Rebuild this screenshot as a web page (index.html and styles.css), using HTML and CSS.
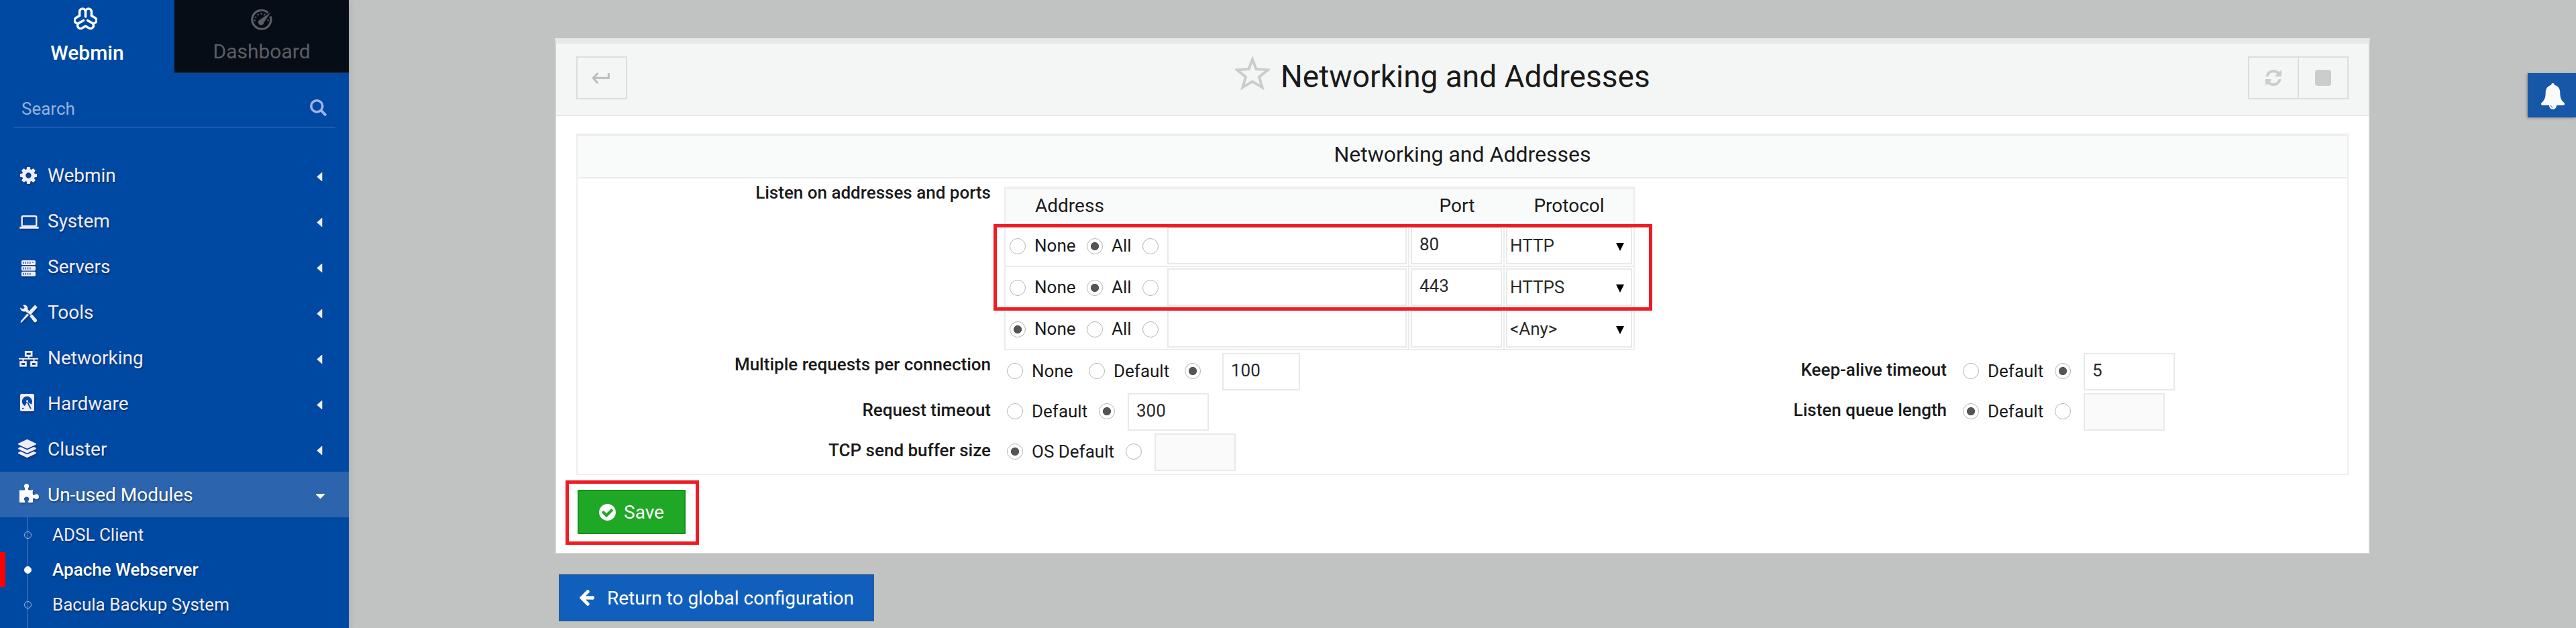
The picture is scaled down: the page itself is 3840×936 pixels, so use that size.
FILE: index.html
```html
<!DOCTYPE html>
<html lang="en">
<head>
<meta charset="utf-8">
<title>Networking and Addresses</title>
<link rel="stylesheet" href="styles.css">
</head>
<body>
<div class="app">
  <aside class="sidebar">
    <nav class="tabs">
      <a class="tab tab-active">
        <svg class="logo" width="35" height="33" viewBox="0 0 35 33" fill="none" stroke="#fff" stroke-width="3.5" stroke-linecap="round" stroke-linejoin="round">
          <defs><path id="lobe" d="M8.6 12.3V6.4a4.45 4.45 0 0 1 8.9 0V14M17.5 6.4a4.45 4.45 0 0 1 8.9 0v5.9"/></defs>
          <use href="#lobe"/>
          <use href="#lobe" transform="rotate(120 17.5 17.6)"/>
          <use href="#lobe" transform="rotate(240 17.5 17.6)"/>
        </svg>
        <span>Webmin</span>
      </a>
      <a class="tab tab-dark">
        <svg class="gauge" width="32" height="32" viewBox="0 0 32 32" fill="none">
          <path d="M25.5 5.1A14 14 0 1 0 29 10.4" stroke="currentColor" stroke-width="3.2"/>
          <path d="M29.6 4.2 19.4 19.4a4.2 4.2 0 1 1-5.6-4.2z" fill="currentColor"/>
          <g fill="currentColor"><circle cx="5.8" cy="16.4" r="1.2"/><circle cx="7.2" cy="11.6" r="1.2"/><circle cx="10.6" cy="7.9" r="1.2"/><circle cx="15.4" cy="6.5" r="1.2"/><circle cx="20.2" cy="7.7" r="1.2"/><circle cx="25.6" cy="16.4" r="1.2"/></g>
        </svg>
        <span>Dashboard</span>
      </a>
    </nav>
    <div class="search">
      <span>Search</span>
      <svg width="25" height="25" viewBox="0 0 25 25" fill="none" stroke="#9fb2e4" stroke-linecap="round"><circle cx="10.3" cy="10.3" r="8.5" stroke-width="3.6"/><path d="m17.2 17.2 5.5 5.6" stroke-width="4"/></svg>
    </div>
    <ul class="menu">
      <li class="item"><span class="icon"><svg class="i-cog" width="25" height="25" viewBox="0 0 1536 1536" fill="currentColor"><path d="M1024 768q0-106-75-181t-181-75-181 75-75 181 75 181 181 75 181-75 75-181zm512-109v222q0 12-8 23t-20 13l-185 28q-19 54-39 91 35 50 107 138 10 12 10 25t-9 23q-27 37-99 108t-94 71q-12 0-26-9l-138-108q-44 23-91 38-16 136-29 186-7 28-36 28H657q-14 0-24.500-8.500T621 1506l-28-184q-49-16-90-37l-141 107q-10 9-25 9-14 0-25-11-126-114-165-168-7-10-7-23 0-12 8-23 15-21 51-66.500t54-70.500q-27-50-41-99L29 913q-13-2-21-12.500T0 877V655q0-12 8-23t19-13l186-28q14-46 39-92-40-57-107-138-10-12-10-24 0-10 9-23 26-36 98.500-107.500T337 135q13 0 26 10l138 107q44-23 91-38 16-136 29-186 7-28 36-28h222q14 0 24.500 8.500T915 30l28 184q49 16 90 37l142-107q9-9 24-9 13 0 25 10 129 119 165 170 7 8 7 22 0 12-8 23-15 21-51 66.500t-54 70.500q26 50 41 98l183 28q13 2 21 12.500t8 23.500z"/></svg></span><span class="name">Webmin</span><svg class="caret" width="13" height="13" viewBox="0 0 13 13" fill="currentColor"><path d="M9.300 0v13h-.8L1.300 6.500 8.500 0z"/></svg></li>
      <li class="item"><span class="icon"><svg class="i-laptop" width="29" height="20" viewBox="0 0 29 20" fill="none" stroke="currentColor" stroke-width="2.400"><rect x="3.700" y="1.200" width="21.600" height="14.800" rx="1.600"/><path d="M.3 18.300h28.400" stroke-width="3"/></svg></span><span class="name">System</span><svg class="caret" width="13" height="13" viewBox="0 0 13 13" fill="currentColor"><path d="M9.300 0v13h-.8L1.300 6.500 8.500 0z"/></svg></li>
      <li class="item"><span class="icon"><svg class="i-server" width="21" height="24" viewBox="0 0 21 24"><g fill="currentColor"><rect width="21" height="7" rx="1.500"/><rect y="8.400" width="21" height="7" rx="1.500"/><rect y="16.800" width="21" height="7" rx="1.500"/></g><path d="M3 2v3M6.300 2v3M9.600 2v3M12.900 2v3M17 2.500v1.500M3 10.400v3M6.300 10.400v3M9.600 10.400v3M12.900 10.400v3M3 18.800v3M6.300 18.800v3M9.600 18.800v3M12.900 18.800v3" stroke="#0049a2" stroke-width="1.300"/></svg></span><span class="name">Servers</span><svg class="caret" width="13" height="13" viewBox="0 0 13 13" fill="currentColor"><path d="M9.300 0v13h-.8L1.300 6.500 8.500 0z"/></svg></li>
      <li class="item"><span class="icon"><svg class="i-tools" width="26" height="27" viewBox="0 0 26 27" fill="currentColor"><path d="M4.200.8C8-.6 12.300 2 11.400 7.200l2.200 2.400-3 3-2.800-2.700C4.500 11.500.3 9.300 0 4.600l4.100 2.200 2.700-2.400z"/><path d="M14.300 17.600l3.300-3.300 6.700 7.500a2.700 2.700 0 0 1-3.600 4z"/><path d="M22.200.5 25.800 4 15.300 15.700l-4.200-3.800z"/><path d="m10.600 13.300 2.500 2.300L2.300 26.400.6 26.900l.5-2.300z"/></svg></span><span class="name">Tools</span><svg class="caret" width="13" height="13" viewBox="0 0 13 13" fill="currentColor"><path d="M9.300 0v13h-.8L1.300 6.500 8.500 0z"/></svg></li>
      <li class="item"><span class="icon"><svg class="i-net" width="29" height="24" viewBox="0 0 29 24" fill="none" stroke="currentColor"><g stroke-width="2.800"><rect x="10.300" y="1.400" width="8.800" height="5.800"/><rect x="2.600" y="16.600" width="7.800" height="5.600"/><rect x="18.600" y="16.600" width="7.800" height="5.600"/></g><path d="M0 11.800h29M14.700 8v4M6.500 12v4M22.500 12v4" stroke-width="2"/></svg></span><span class="name">Networking</span><svg class="caret" width="13" height="13" viewBox="0 0 13 13" fill="currentColor"><path d="M9.300 0v13h-.8L1.300 6.500 8.500 0z"/></svg></li>
      <li class="item"><span class="icon"><svg class="i-disk" width="21" height="26" viewBox="0 0 21 26"><rect width="21" height="26" rx="2.500" fill="currentColor"/><path d="M7.200 18.300A7.600 7.600 0 1 1 16.600 15.800l-5-3.600-2.200 1.600z" fill="#0049a2"/><circle cx="10.500" cy="10.800" r="1.500" fill="currentColor"/><path d="m10.600 14 1.600-.9 4.600 8.600-1.800.9z" fill="#0049a2"/><circle cx="4.200" cy="21.900" r="1.200" fill="#0049a2"/></svg></span><span class="name">Hardware</span><svg class="caret" width="13" height="13" viewBox="0 0 13 13" fill="currentColor"><path d="M9.300 0v13h-.8L1.300 6.500 8.500 0z"/></svg></li>
      <li class="item"><span class="icon"><svg class="i-layers" width="27" height="27" viewBox="0 0 512 512" fill="currentColor"><path d="M12.410 148.020l232.940 105.670c6.800 3.090 14.490 3.090 21.290 0l232.940-105.670c16.550-7.510 16.550-32.520 0-40.030L266.650 2.310a25.607 25.607 0 0 0-21.290 0L12.410 107.980c-16.550 7.510-16.550 32.530 0 40.040zm487.180 88.280l-58.090-26.330-161.640 73.270c-7.560 3.430-15.590 5.170-23.860 5.170s-16.290-1.740-23.860-5.170L70.510 209.970l-58.100 26.330c-16.550 7.500-16.550 32.500 0 40l232.940 105.590c6.800 3.080 14.490 3.080 21.290 0L499.590 276.300c16.550-7.500 16.550-32.500 0-40zm0 127.800l-57.870-26.230-161.860 73.370c-7.560 3.430-15.590 5.170-23.860 5.170s-16.290-1.740-23.860-5.170L70.290 337.870 12.410 364.100c-16.550 7.500-16.550 32.500 0 40l232.940 105.590c6.800 3.080 14.490 3.080 21.290 0L499.590 404.100c16.550-7.500 16.550-32.500 0-40z"/></svg></span><span class="name">Cluster</span><svg class="caret" width="13" height="13" viewBox="0 0 13 13" fill="currentColor"><path d="M9.300 0v13h-.8L1.300 6.500 8.500 0z"/></svg></li>
      <li class="item item-open"><span class="icon"><svg class="i-puzzle" width="29" height="28" viewBox="0 0 29 28" fill="currentColor"><path d="M0 9.200q4 .9 7.800.2C9.500 8.300 7 5.700 7 3.500 7 1.300 8.600 0 10.600 0s3.600 1.300 3.600 3.500c0 2.200-2.400 4.200-1 5.600 2.400.9 4.800.5 7-.1-.6 3-.7 5.500 0 7.600 1.500 1.300 2.700-1.200 5.200-1.200 2.400 0 3.600 1.700 3.600 3.800s-1.300 3.800-3.500 3.800c-2.500 0-3.500-2.200-5-1.500-1 1.700-.5 4.300 0 6.300-2.400.4-4.800.6-7.300 0-1-1.400 1.300-2.500 1.300-5 0-2-1.600-3.400-3.700-3.400S6.900 20.800 6.900 22.800c0 2.400 2.300 3.500 1.400 4.900-2.500.5-5.600.2-8.300 0z"/></svg></span><span class="name">Un-used Modules</span><svg class="caret" width="13" height="13" viewBox="0 0 13 13" fill="currentColor"><path d="M0 3h13v1L6.500 10.500 0 4z"/></svg></li>
    </ul>
    <ul class="submenu">
      <li class="sub"><i class="dot"></i><span>ADSL Client</span></li>
      <li class="sub sub-active"><i class="dot"></i><span>Apache Webserver</span></li>
      <li class="sub"><i class="dot"></i><span>Bacula Backup System</span></li>
      <li class="sub"></li>
    </ul>
  </aside>

  <main class="main">
    <section class="panel">
      <header class="panel-head">
        <a class="tool tool-back"><svg width="27" height="17" viewBox="0 0 27 17" fill="none" stroke="#bcbcbc" stroke-width="3"><path d="M25.300 1v7.300H3"/><path d="M9.200 1 2.200 8.300l7 7.700"/></svg></a>
        <h1 class="title"><svg width="52" height="50" viewBox="0 0 52 50" fill="none" stroke="#ccc" stroke-width="4"><path d="M26 4.500 31.400 18.800 49 20.200 36 30.600l4.600 15.600L26 37.500l-14.600 8.700L16 30.600 3 20.200l17.600-1.400z"/></svg><span>Networking and Addresses</span></h1>
        <div class="tools">
          <a class="tool"><svg width="24" height="24" viewBox="0 0 1536 1536" fill="#ccc"><path d="M1511 928q0 5-1 7-64 268-268 434.500T764 1536q-146 0-282.500-55T238 1324l-129 129q-19 19-45 19t-45-19-19-45V960q0-26 19-45t45-19h448q26 0 45 19t19 45-19 45l-137 137q71 66 161 102t187 36q134 0 250-65t186-179q11-17 53-117 8-23 30-23h192q13 0 22.500 9.500t9.500 22.500zm25-800v448q0 26-19 45t-45 19h-448q-26 0-45-19t-19-45 19-45l138-138Q969 256 768 256q-134 0-250 65T332 500q-11 17-53 117-8 23-30 23H50q-13 0-22.500-9.500T18 608v-7q65-268 270-434.500T768 0q146 0 284 55.500T1297 212l130-129q19-19 45-19t45 19 19 45z"/></svg></a>
          <a class="tool"><i class="stop"></i></a>
        </div>
      </header>
      <div class="panel-body">
        <div class="fieldset">
          <h2 class="legend">Networking and Addresses</h2>
          <div class="form-row form-row-listen">
            <label class="label">Listen on addresses and ports</label>
            <div class="listen">
              <div class="lrow lhead"><span>Address</span><span>Port</span><span>Protocol</span></div>
              <div class="lrow">
                <div class="cell addr"><i class="radio"></i><span class="w-none">None</span><i class="radio on"></i><span class="w-all">All</span><i class="radio"></i><input class="text" type="text"></div>
                <div class="cell"><input class="text" type="text" value="80"></div>
                <div class="cell"><div class="select"><span>HTTP</span><svg width="12" height="12" viewBox="0 0 12 12"><path d="M0 0h12L6 12z"/></svg></div></div>
              </div>
              <div class="lrow">
                <div class="cell addr"><i class="radio"></i><span class="w-none">None</span><i class="radio on"></i><span class="w-all">All</span><i class="radio"></i><input class="text" type="text"></div>
                <div class="cell"><input class="text" type="text" value="443"></div>
                <div class="cell"><div class="select"><span>HTTPS</span><svg width="12" height="12" viewBox="0 0 12 12"><path d="M0 0h12L6 12z"/></svg></div></div>
              </div>
              <div class="lrow">
                <div class="cell addr"><i class="radio on"></i><span class="w-none">None</span><i class="radio"></i><span class="w-all">All</span><i class="radio"></i><input class="text" type="text"></div>
                <div class="cell"><input class="text" type="text"></div>
                <div class="cell"><div class="select"><span>&lt;Any&gt;</span><svg width="12" height="12" viewBox="0 0 12 12"><path d="M0 0h12L6 12z"/></svg></div></div>
              </div>
              <div class="mark mark-rows"></div>
            </div>
          </div>
          <div class="form-row">
            <label class="label label-high">Multiple requests per connection</label>
            <div class="value multi"><i class="radio"></i><span class="opt opt-none">None</span><i class="radio"></i><span class="opt opt-def">Default</span><i class="radio on"></i><input class="text" type="text" value="100"></div>
            <label class="label">Keep-alive timeout</label>
            <div class="value"><i class="radio"></i><span class="opt">Default</span><i class="radio on"></i><input class="text text-l" type="text" value="5"></div>
          </div>
          <div class="form-row">
            <label class="label">Request timeout</label>
            <div class="value"><i class="radio"></i><span class="opt">Default</span><i class="radio on"></i><input class="text" type="text" value="300"></div>
            <label class="label">Listen queue length</label>
            <div class="value"><i class="radio on"></i><span class="opt">Default</span><i class="radio"></i><input class="text off" type="text"></div>
          </div>
          <div class="form-row">
            <label class="label">TCP send buffer size</label>
            <div class="value"><i class="radio on"></i><span class="opt opt-os">OS Default</span><i class="radio"></i><input class="text off" type="text"></div>
          </div>
        </div>
        <div class="actions">
          <a class="btn save"><svg width="25" height="25" viewBox="0 0 1536 1536" fill="#fff"><path d="M1284 606q0-28-18-46l-91-90q-19-19-45-19t-45 19l-408 407-226-226q-19-19-45-19t-45 19l-91 90q-18 18-18 46 0 27 18 45l362 362q19 19 45 19 27 0 46-19l543-543q18-18 18-45zm252 162q0 209-103 385.500T1153.500 1433 768 1536t-385.500-103T103 1153.500 0 768t103-385.500T382.500 103 768 0t385.500 103T1433 382.500 1536 768z"/></svg><span>Save</span></a>
          <div class="mark mark-save"></div>
        </div>
      </div>
    </section>
    <a class="btn return"><svg width="22" height="24" viewBox="0 0 22 24" fill="none" stroke="#fff" stroke-linecap="round"><path d="M20 12H4" stroke-width="5.200" stroke-linecap="butt"/><path d="M19.500 12h.2" stroke-width="5.200"/><path d="M12.200 2.700 3 12l9.200 9.300" stroke-width="5"/></svg><span>Return to global configuration</span></a>
  </main>
  <a class="bell"><svg width="35" height="39" viewBox="0 0 35 39"><path d="M17.500 0a2.300 2.300 0 0 1 2.300 2.800C25 4 28.200 8 28.300 13.500c0 7.500 1.200 11.500 5.900 15.600 1.700 1.600.7 3.900-1 3.900H23c0 3.500-2.500 6-5.500 6S12 36.500 12 33H1.800c-1.700 0-2.700-2.300-1-3.900C5.500 25 6.700 21 6.700 13.500 6.800 8 10 4 15.200 2.800A2.300 2.300 0 0 1 17.500 0z" fill="#fafafa"/><path d="M14.400 33q.3 3 3.100 3.200" fill="none" stroke="#1657a8"/></svg></a>
</div>
</body>
</html>
```

FILE: styles.css
```css
* { box-sizing: border-box; }
html, body { height: 100%; }
body {
  margin: 0;
  overflow: hidden;
  background: #c1c3c2;
  font-family: Roboto, "Liberation Sans", sans-serif;
  font-size: 26px;
  color: #1a1a1a;
}
ul { list-style: none; margin: 0; padding: 0; }
h1, h2 { margin: 0; font-weight: 400; }
svg { display: block; flex: none; }
.app { display: flex; height: 936px; }

/* Sidebar */
.sidebar {
  width: 520px;
  flex: none;
  background: #0049a2;
  color: #f0ecfb;
  box-shadow: 1px 0 8px rgba(0, 0, 0, .12);
  overflow: hidden;
}
.tabs { display: flex; height: 109px; }
.tab {
  width: 260px;
  display: flex;
  flex-direction: column;
  align-items: center;
  font-size: 30px;
  line-height: 36px;
}
.tab-active { padding-top: 11px; font-weight: 500; color: #fff; }
.tab-active .logo { margin: 0 6px 0 0; }
.tab-active span { margin-top: 17px; }
.tab-dark {
  padding-top: 14px;
  background: #060d17;
  border-bottom: 2px solid #1d242e;
  color: #5b5e63;
}
.tab-dark span { margin-top: 13px; }
.search {
  display: flex;
  justify-content: space-between;
  align-items: flex-start;
  height: 82px;
  margin: 0 20px;
  padding: 38px 13px 0 12px;
  border-bottom: 2px solid #1c5cad;
  line-height: 30px;
  color: #96b2da;
}
.search svg { margin-top: 1px; }
.menu { padding-top: 36px; }
.item {
  display: flex;
  align-items: center;
  height: 68px;
  padding-right: 36px;
  font-size: 28px;
  text-shadow: 1px 2px 2px rgba(0, 0, 0, .35);
}
.item .icon {
  width: 71px;
  flex: none;
  filter: drop-shadow(1px 2px 1px rgba(0, 0, 0, .25));
}
.item .name { flex: 1; }
.caret { margin-top: 4px; }
.item-open { background: #2c64ae; color: #fff; }
.i-cog { margin: 0 0 0 30px; }
.i-laptop { margin: 4px 0 0 29px; }
.i-server { margin: 5px 0 0 32px; }
.i-tools { margin: 4px 0 0 30px; }
.i-net { margin: 3px 0 0 28px; }
.i-disk { margin: 0 0 2px 30px; }
.i-layers { margin: 0 0 2px 27px; }
.i-puzzle { margin: 0 0 4px 29px; }
.submenu {
  background: linear-gradient(#2c64ae, #2c64ae) 40px 0 / 2px 100% no-repeat;
}
.sub {
  display: flex;
  align-items: center;
  height: 52px;
  padding-left: 36px;
  text-shadow: 1px 2px 2px rgba(0, 0, 0, .35);
}
.dot {
  width: 11px;
  height: 11px;
  margin-right: 31px;
  border: 1px solid #a6bee0;
  border-radius: 50%;
}
.sub-active {
  font-weight: 500;
  color: #fff;
  border-left: 8px solid #f00;
  padding-left: 28px;
}
.sub-active .dot { background: #fff; border-color: #fff; }

/* Main area */
.main { padding: 57px 0 0 307px; }
.panel {
  width: 2706px;
  height: 769px;
  border: 2px solid #cfd1d0;
  border-top: 8px solid #e8e8e8;
  background: #fff;
}
.panel-head {
  display: flex;
  align-items: flex-start;
  height: 108px;
  padding: 19px 30px 0;
  background: #f4f6f5;
  border-bottom: 2px solid #e6e8e7;
}
.tool {
  display: flex;
  align-items: center;
  justify-content: center;
  width: 76px;
  height: 64px;
  border: 2px solid #dcdedd;
}
.tool-back { padding-right: 4px; }
.tools { display: flex; }
.tools .tool + .tool { margin-left: -2px; }
.stop { width: 24px; height: 24px; border-radius: 4px; background: #ccc; }
.title {
  flex: 1;
  display: flex;
  align-items: flex-start;
  padding-left: 906px;
  font-size: 46px;
  line-height: 60px;
}
.title span { margin-left: 16px; }
.panel-body { padding: 26px 30px 0; }
.fieldset {
  height: 509px;
  border: 2px solid #eee;
  border-top: 4px solid #efefef;
}
.legend {
  height: 63px;
  background: #f9fbfa;
  border-bottom: 2px solid #ebedec;
  font-size: 32px;
  line-height: 54px;
  text-align: center;
}
.form-row {
  display: grid;
  grid-template-columns: 616px 640px 785px 1fr;
  height: 60px;
}
.form-row-listen { height: 260px; }
.label {
  font-weight: 500;
  line-height: 50px;
  text-align: right;
  white-space: nowrap;
}
.form-row-listen .label { line-height: 42px; }
.label-high { line-height: 34px; }
.value { display: flex; align-items: center; height: 54px; padding-left: 24px; }
.radio {
  width: 24px;
  height: 24px;
  flex: none;
  border: 1px solid #b4b4b4;
  border-radius: 50%;
  background: #fff;
}
.radio.on { background: radial-gradient(circle, #555 0 5.7px, #fff 6.4px); }
.opt { width: 100px; flex: none; margin-left: 13px; white-space: nowrap; }
.opt-none { width: 85px; }
.opt-def { width: 106px; }
.opt-os { width: 140px; }
.text {
  display: block;
  width: 121px;
  height: 56px;
  margin: 0;
  padding: 0 11px 4px;
  border: 2px solid #e8e9e9;
  border-radius: 0;
  outline: 0;
  background: #fff;
  font: inherit;
  color: #2a2a2a;
}
.value .text { margin: 2px 0 0 19px; }
.text.off { background: #fafafa; }
.value .text-l { width: 136px; }
.value.multi .text { width: 116px; margin-left: 32px; }

/* Address / port / protocol table */
.listen {
  position: relative;
  width: 940px;
  height: 244px;
  margin: 12px 0 0 20px;
  border: 2px solid #ebeded;
  border-top: 4px solid #efefef;
  border-bottom: 0;
}
.lrow {
  display: grid;
  grid-template-columns: 602px 142px 192px;
  height: 62px;
  border-bottom: 2px solid #ebeded;
}
.lhead {
  height: 54px;
  background: #f9fbfa;
  font-size: 28px;
  line-height: 49px;
  text-align: center;
}
.lhead span:first-child { padding-left: 44px; text-align: left; }
.cell { min-width: 0; padding: 2px; border-right: 2px solid #ebeded; }
.cell:last-child { border-right: 0; }
.cell .text { width: 100%; }
.cell.addr { display: flex; align-items: center; padding: 0 2px 0 6px; }
.addr .radio { margin-top: 2px; }
.cell.addr .text { flex: none; width: 357px; margin-left: 13px; }
.w-none { width: 78px; flex: none; margin-left: 13px; }
.w-all { width: 46px; flex: none; margin-left: 13px; }
.select {
  display: flex;
  justify-content: space-between;
  align-items: center;
  height: 56px;
  padding: 0 10px 0 4px;
  border: 2px solid #e8e9e9;
  background: #fff;
  color: #2a2a2a;
}
.select svg { margin-top: 4px; }

/* Red highlight frames laid over the form */
.mark { position: absolute; border: 5px solid #ee1c25; }
.mark-rows { left: -18px; top: 52px; width: 982px; height: 129px; }
.mark-save { left: -16px; top: 8px; width: 199px; height: 96px; }

.actions { position: relative; padding: 22px 0 0 2px; }
.btn { display: flex; align-items: center; font-size: 28px; color: #fff; }
.save {
  width: 161px;
  height: 66px;
  padding-left: 30px;
  background: #1ea825;
  border: 2px solid #189220;
}
.save span { margin-left: 12px; }
.return {
  width: 470px;
  height: 70px;
  margin: 30px 0 0 6px;
  padding-left: 29px;
  background: #115fbc;
  border: 2px solid #205b9f;
}
.return span { margin-left: 19px; }

/* Notification handle at the window edge */
.bell {
  position: absolute;
  right: 0;
  top: 109px;
  width: 72px;
  height: 66px;
  padding: 15px 0 0 20px;
  background: #1657a8;
  box-shadow: -1px 1px 4px rgba(0, 0, 0, .3);
}
```
